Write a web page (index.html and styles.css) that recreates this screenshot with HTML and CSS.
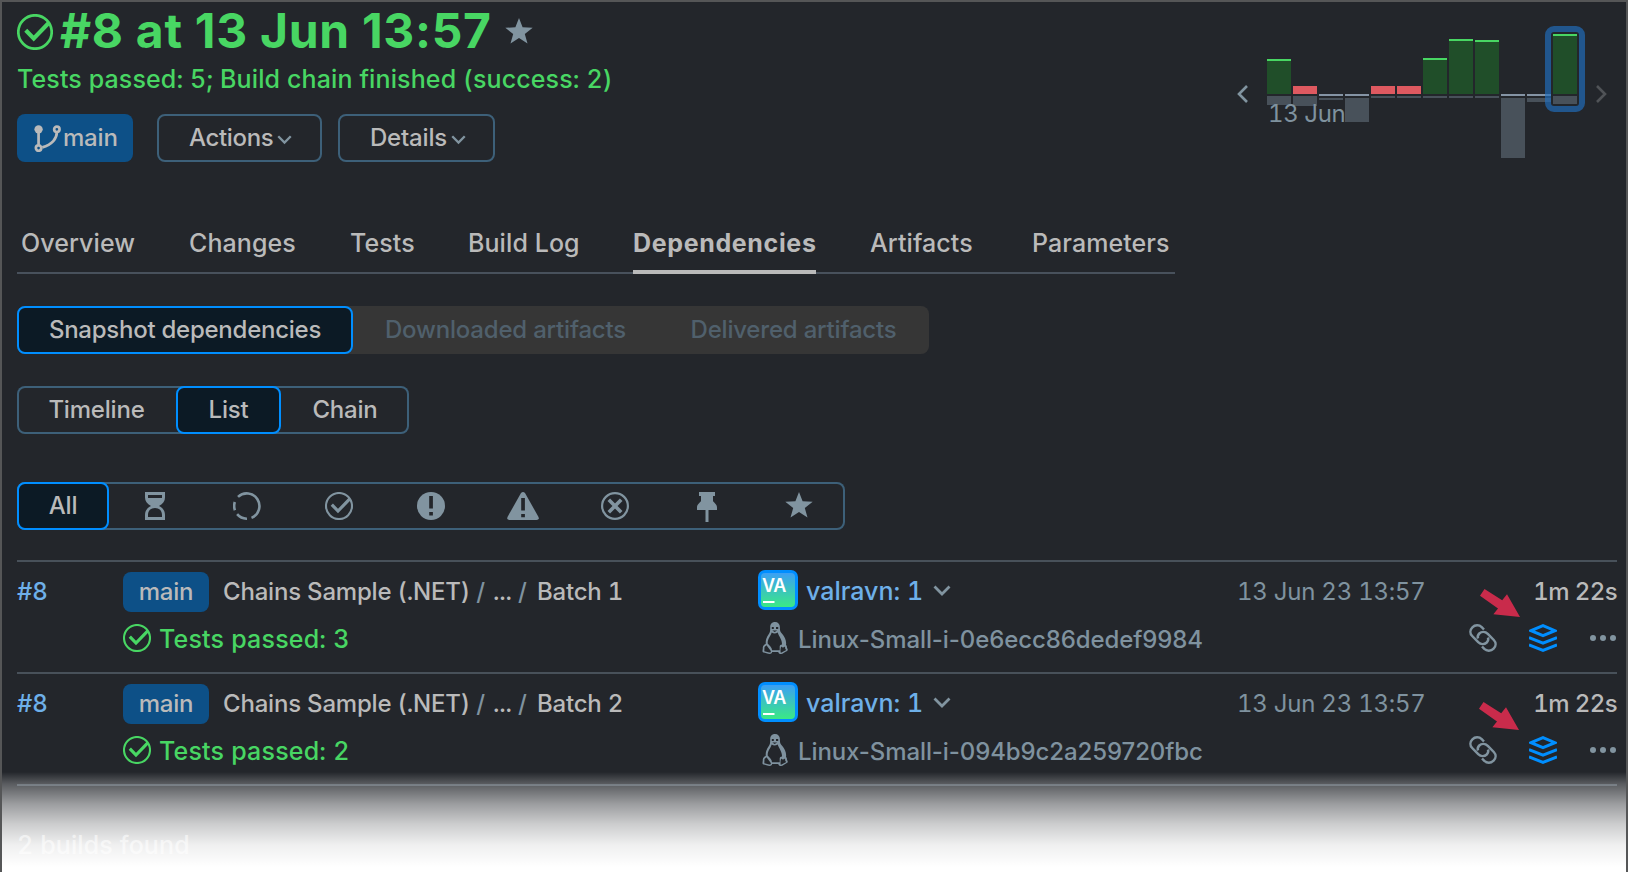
FILE: index.html
```html
<!DOCTYPE html>
<html lang="en">
<head>
<meta charset="utf-8">
<title>Build #8 dependencies</title>
<link rel="stylesheet" href="styles.css">
</head>
<body>
<svg class="defs" width="0" height="0">
  <defs>
    <linearGradient id="avatar-fill" x1="0" y1="0" x2="0" y2="1"><stop offset="0" stop-color="#3b9ff5"/><stop offset="1" stop-color="#3be985"/></linearGradient>
    <symbol id="check" viewBox="0 0 28 28"><g fill="none" stroke="currentColor"><circle cx="14" cy="14" r="13" stroke-width="2.100"/><path d="M6.8 12.6l6.2 6.4L25 6.600" stroke-width="3.200"/></g></symbol>
    <symbol id="star" viewBox="0 0 28 26"><path fill="currentColor" d="M14 0l3.6 9.3 10.1.5-7.9 6.2 2.7 9.6L14 20.1l-8.5 5.500L8.200 16 .3 9.800l10.100-.5z"/></symbol>
    <symbol id="chevron" viewBox="0 0 18 12"><path d="M1.500 1.500L9 9l7.500-7.500" fill="none" stroke="currentColor" stroke-width="2.800"/></symbol>
    <symbol id="tux" viewBox="0 0 26 32"><path fill="currentColor" d="M13 0c-3.200 0-4.800 2.200-4.800 5 0 3.600.1 5-1.700 7.600-1.900 2.800-3.200 5.700-2.700 9.200C1.800 23 .4 24.500.8 26.500c-.2 1.600-.9 3.700.7 4.100 1.700.3 5.300 1.700 7.300 1.200 1.300-.4 1.300-1.700 1.300-1.700h6.200s.3 1.700 1.700 1.900c2.500.3 3.900-1.500 6-2.500 1.700-.9 2.300-1.500 1.200-3.300-.5-1 .2-2.300-1.200-3.300.7-4.200-1.300-8-3.700-11C17.800 9.500 18 8 17.900 5 17.800 2 16 0 13 0z"/><path fill="#23262b" d="M9.700 10.500c1.800 1.300 3.900 1.300 6 0 .9 3.500 4.600 7 4.300 12-1.400 0-2.300.7-2.300 2v3.800H10c.1-3-2.700-5-4.300-6.900-.2-4.400 2.700-7 4-10.900zM4.500 23.300l4.300 5.600c.3 1.400-.5 1.700-1.600 1.500l-4.900-1.200.2-4.300zM19.300 24.600c1 1.400 2.500 1 3.700-.2l.3 2.500 1 1.200-5.300 2.700c-.7-.3-.6-4.600.3-6.200z"/><path fill="#23262b" d="M9.800 5h2v2h-2zM14 5h2.200v2H14zM10.300 8.400h4.800L12.700 10z"/></symbol>
    <symbol id="link" viewBox="0 0 28 28"><g fill="none" stroke="currentColor" stroke-width="2.500"><path d="M15 5.500l-2.300-2.400C10.200.7 6 .7 3.400 3.300.8 5.900.8 9.500 3.200 12l6 6.200c2.600 2.500 6.200 2.500 8.500.3 1.500-1.500 1.900-3.300 1.300-5"/><path d="M13 22.500l2.300 2.400c2.500 2.400 6.700 2.400 9.300-.2 2.600-2.600 2.600-6.200.2-8.700l-6-6.200c-2.600-2.500-6.200-2.500-8.500-.3-1.500 1.500-1.900 3.300-1.300 5"/></g></symbol>
    <symbol id="layers" viewBox="0 0 28 28"><g fill="none" stroke="currentColor" stroke-width="3"><path d="M2 6.700l12-5 12 5-12 5z"/><path d="M0 13.600l14 5.500 14-5.500M0 20.800l14 5.500 14-5.500"/></g></symbol>
    <symbol id="dots" viewBox="0 0 26 6"><g fill="currentColor"><circle cx="3" cy="3" r="3"/><circle cx="13" cy="3" r="3"/><circle cx="23" cy="3" r="3"/></g></symbol>
    <symbol id="arrow" viewBox="0 0 40 28"><path fill="#c92b4b" d="M4.500 0l17.700 11.200L27 5.200 40 28l-26.600-2.800 4.600-5.700L0 6.800z"/></symbol>
  </defs>
</svg>
<div class="page">
  <header class="header">
    <div class="summary">
      <h1 class="title"><svg class="title-check"><use href="#check"/></svg><span class="title-text">#8 at 13 Jun 13:57</span><svg class="title-star"><use href="#star"/></svg></h1>
      <p class="status">Tests passed: 5; Build chain finished (success: 2)</p>
      <div class="actions">
        <a class="branch"><svg class="branch-icon" viewBox="0 0 26 26"><g fill="none" stroke="#bababa" stroke-width="2.600"><path d="M4.400 4v15M22 7c0 6-4.500 12-14 14.500"/><circle cx="4.400" cy="22.200" r="2.600"/><circle cx="22" cy="4.200" r="2.600"/></g><circle cx="4.400" cy="4.200" r="4" fill="#bababa"/></svg><span>main</span></a>
        <button class="button button-actions"><span>Actions</span><svg class="button-chevron"><use href="#chevron"/></svg></button>
        <button class="button button-details"><span>Details</span><svg class="button-chevron"><use href="#chevron"/></svg></button>
      </div>
    </div>
    <svg class="history" viewBox="1230 20 390 145">
      <g fill="#48515a"><path d="M1267 96h24v9h-24zM1293 96h24v10h-24zM1319 98h24v2h-24zM1345 98h24v24h-24zM1371 96h24v2h-24zM1397 96h24v2h-24zM1423 96h24v2h-24zM1449 96h24v2h-24zM1475 96h24v2h-24zM1501 98h24v60h-24zM1527 98h24v4h-24zM1553 96h24v8h-24z"/></g>
      <path fill="#8594a5" d="M1319 94h24v2h-24zM1345 94h24v2h-24zM1501 94h24v2h-24zM1527 94h24v2h-24z"/>
      <path fill="#204e29" d="M1267 59h24v35h-24zM1423 58h24v36h-24zM1449 39h24v55h-24zM1475 40h24v54h-24zM1553 34h24v60h-24z"/>
      <path fill="#48d663" d="M1267 59h24v2h-24zM1423 58h24v2h-24zM1449 39h24v2h-24zM1475 40h24v2h-24zM1553 34h24v2h-24z"/>
      <path fill="#de5960" d="M1293 86h24v8h-24zM1371 86h24v8h-24zM1397 86h24v8h-24z"/>
      <rect x="1548" y="29" width="34" height="80" rx="6" fill="none" stroke="#2170c2" stroke-opacity=".65" stroke-width="6"/>
      <text class="history-date" x="1268" y="122">13 Jun</text>
      <path d="M1247 86l-8 8 8 8" fill="none" stroke="#8194a0" stroke-width="2.600"/>
      <path d="M1597 86l8 8-8 8" fill="none" stroke="#505357" stroke-width="2.600"/>
    </svg>
  </header>

  <nav class="tabs">
    <a class="tab t-overview">Overview</a><a class="tab t-changes">Changes</a><a class="tab t-tests">Tests</a><a class="tab t-log">Build Log</a><a class="tab tab-active">Dependencies</a><a class="tab t-artifacts">Artifacts</a><a class="tab t-params">Parameters</a>
  </nav>

  <div class="group group-kind"><span class="seg seg-active seg-snapshot">Snapshot dependencies</span><span class="seg seg-downloaded">Downloaded artifacts</span><span class="seg seg-delivered">Delivered artifacts</span></div>
  <div class="group group-view"><span class="seg seg-timeline">Timeline</span><span class="seg seg-active seg-list">List</span><span class="seg seg-chain">Chain</span></div>
  <div class="group group-filter">
    <span class="seg seg-active seg-all">All</span>
    <span class="cell"><svg viewBox="0 0 28 28"><path fill="currentColor" fill-rule="evenodd" d="M4 0h20v5.500c0 3.500-2 6.500-6 8.500 4 2 6 5 6 9v5H4v-5c0-4 2-7 6-9-4-2-6-5-6-8.500zM7 3v3h14V3zM7 25h14v-2c0-4.500-3-7-7-7s-7 2.500-7 7z"/></svg></span>
    <span class="cell"><svg viewBox="0 0 28 28"><g fill="none" stroke="currentColor" stroke-width="2.600"><path d="M5 4.900A12.700 12.700 0 1 1 18.500 25.900M1.900 18.200A12.700 12.700 0 0 1 1.800 10"/><path d="M4.100 22.200A12.700 12.700 0 0 0 14 26.700"/></g></svg></span>
    <span class="cell"><svg><use href="#check"/></svg></span>
    <span class="cell"><svg viewBox="0 0 28 28"><circle cx="14" cy="14" r="14" fill="currentColor"/><path fill="#23262b" d="M12.200 4h3.700v12.500h-3.700zM12.200 20h3.700v3.400h-3.700z"/></svg></span>
    <span class="cell"><svg class="wide" viewBox="0 0 32 28"><path fill="currentColor" d="M14 1q2-2 4 0l13.500 24q1 3-2 3h-27q-3 0-2-3z"/><path fill="#23262b" d="M14.200 6h3.700v12.500h-3.700zM14.200 22h3.700v3.200h-3.700z"/></svg></span>
    <span class="cell"><svg viewBox="0 0 28 28"><g fill="none" stroke="currentColor"><circle cx="14" cy="14" r="12.900" stroke-width="2.200"/><path d="M7.800 7.800l12.400 12.400M20.200 7.800L7.800 20.200" stroke-width="3.600"/></g></svg></span>
    <span class="cell"><svg class="pin" viewBox="0 0 20 30"><path fill="currentColor" d="M2 0h16v4h-2v5c1 2 4 3 4 6.500V18h-8.500v12h-3V18H0v-2.500C0 12 3 11 4 9V4H2z"/></svg></span>
    <span class="cell"><svg class="filter-star"><use href="#star"/></svg></span>
  </div>

  <main class="builds">
    <article class="build">
      <a class="number">#8</a>
      <div class="info">
        <div class="path"><span class="badge">main</span><span class="crumbs">Chains Sample (.NET) <i>/</i> ... <i>/</i> Batch 1</span></div>
        <div class="result"><svg class="icon"><use href="#check"/></svg><span>Tests passed: 3</span></div>
      </div>
      <div class="agent">
        <div class="user"><svg class="avatar" viewBox="0 0 40 40"><rect width="40" height="40" rx="7" fill="#008eff"/><rect x="3" y="3" width="34" height="34" rx="4" fill="url(#avatar-fill)"/><text class="avatar-text" x="4" y="22">VA</text><path fill="#fff" d="M5 31h11.500v2H5z"/></svg><span>valravn: 1</span><svg class="user-chevron"><use href="#chevron"/></svg></div>
        <div class="machine"><svg class="tux"><use href="#tux"/></svg><span>Linux-Small-i-0e6ecc86dedef9984</span></div>
      </div>
      <time class="date">13 Jun 23 13:57</time>
      <div class="side">
        <span class="duration">1m 22s</span>
        <div class="tools"><svg class="icon"><use href="#link"/></svg><svg class="icon layers"><use href="#layers"/></svg><svg class="dots"><use href="#dots"/></svg></div>
        <svg class="pointer"><use href="#arrow"/></svg>
      </div>
    </article>
    <article class="build">
      <a class="number">#8</a>
      <div class="info">
        <div class="path"><span class="badge">main</span><span class="crumbs">Chains Sample (.NET) <i>/</i> ... <i>/</i> Batch 2</span></div>
        <div class="result"><svg class="icon"><use href="#check"/></svg><span>Tests passed: 2</span></div>
      </div>
      <div class="agent">
        <div class="user"><svg class="avatar" viewBox="0 0 40 40"><rect width="40" height="40" rx="7" fill="#008eff"/><rect x="3" y="3" width="34" height="34" rx="4" fill="url(#avatar-fill)"/><text class="avatar-text" x="4" y="22">VA</text><path fill="#fff" d="M5 31h11.500v2H5z"/></svg><span>valravn: 1</span><svg class="user-chevron"><use href="#chevron"/></svg></div>
        <div class="machine"><svg class="tux"><use href="#tux"/></svg><span>Linux-Small-i-094b9c2a259720fbc</span></div>
      </div>
      <time class="date">13 Jun 23 13:57</time>
      <div class="side">
        <span class="duration">1m 22s</span>
        <div class="tools"><svg class="icon"><use href="#link"/></svg><svg class="icon layers"><use href="#layers"/></svg><svg class="dots"><use href="#dots"/></svg></div>
        <svg class="pointer pointer-second"><use href="#arrow"/></svg>
      </div>
    </article>
  </main>
  <footer class="found">2 builds found</footer>
  <div class="fade"></div>
</div>
</body>
</html>
```
FILE: styles.css
```css
* { box-sizing: border-box; }
body { margin: 0; background: #fff; }
.defs { position: absolute; }
svg { display: block; flex: none; }
.page {
  position: relative;
  width: 1628px;
  height: 872px;
  overflow: hidden;
  padding: 0 9px 0 15px;
  border: 2px solid #555657;
  border-bottom: 0;
  background: #23262b;
  color: #bababa;
  font: 450 24px/30px Inter, "Liberation Sans", sans-serif;
  letter-spacing: -.2px;
  font-variant-numeric: tabular-nums;
  white-space: nowrap;
}
.header { display: flex; justify-content: space-between; height: 202px; }
.title { display: flex; align-items: center; margin: 0; height: 60px; color: #48d663; font-size: 48px; line-height: 58px; font-weight: 700; letter-spacing: .7px; font-variant-numeric: normal; }
.title-check { width: 36px; height: 36px; }
.title-text { width: 430px; margin: -2px 0 0 7px; }
.title-star { width: 28px; height: 26px; margin: -2px 0 0 15px; color: #8194a0; }
.status { margin: 3px 0 0; color: #48d663; font-size: 25px; line-height: 28px; letter-spacing: .12px; }
.actions { display: flex; margin-top: 21px; }
.branch { display: flex; align-items: center; width: 116px; height: 48px; margin-right: 24px; padding-left: 17px; border-radius: 8px; background: #0d5087; line-height: 46px; }
.branch span, .button span { margin-top: -1px; }
.branch-icon { width: 27px; height: 27px; margin-right: 2px; }
.button { display: flex; align-items: center; height: 48px; margin: 0 16px 0 0; padding: 0 0 0 30px; border: 2px solid #3d6079; border-radius: 8px; background: none; color: inherit; font: inherit; letter-spacing: -.35px; }
.button-actions { width: 165px; }
.button-details { width: 157px; letter-spacing: -.2px; }
.button-chevron { width: 15px; height: 10px; margin: 3px 0 0 4px; color: #8194a0; }
.history { width: 390px; height: 145px; margin: 18px -3px 0 0; }
.history-date { fill: #7f929f; font-size: 24px; font-weight: 400; letter-spacing: -.4px; }

.tabs { display: flex; width: 1158px; height: 70px; padding: 24px 0 0 4px; border-bottom: 2px solid #48515c; font-size: 25px; letter-spacing: .08px; }
.tab { height: 46px; line-height: 30px; }
.t-overview { width: 168px; }
.t-changes { width: 161px; }
.t-tests { width: 118px; }
.t-log { width: 165px; }
.tab-active { width: 183px; margin-right: 54px; border-bottom: 4px solid #bababa; font-weight: 700; letter-spacing: .65px; }
.t-artifacts { width: 162px; }

.group { display: flex; height: 48px; border-radius: 8px; line-height: 48px; }
.seg { text-align: center; }
.seg-active { height: 48px; border: 2px solid #008eff; border-radius: 8px; background: #0c1a25; line-height: 44px; }
.group-kind { width: 912px; margin-top: 32px; background: #363636; color: #50606c; }
.seg-snapshot { width: 336px; color: #bababa; letter-spacing: -.25px; }
.seg-downloaded { width: 305px; }
.seg-delivered { width: 271px; }
.group-view { width: 392px; margin-top: 32px; box-shadow: inset 0 0 0 2px #3d6079; }
.seg-timeline { width: 159px; }
.seg-list { width: 105px; }
.seg-chain { width: 128px; }
.group-filter { width: 828px; margin-top: 48px; box-shadow: inset 0 0 0 2px #3d6079; }
.seg-all { width: 92px; }
.cell { display: flex; align-items: center; justify-content: center; width: 92px; color: #8194a0; }
.cell svg { width: 28px; height: 28px; }
.cell .wide { width: 32px; }
.cell .pin { width: 20px; height: 30px; margin-top: 2px; }
.cell .filter-star { height: 26px; margin-top: -2px; }

.builds { margin-top: 30px; border-bottom: 2px solid #48515a; }
.build { display: grid; grid-template-columns: 106px 635px 479px 1fr auto; height: 112px; padding-top: 8px; border-top: 2px solid #48515a; line-height: 44px; }
.number, .user { color: #6eb0e9; }
.path, .user, .result, .machine, .tools { display: flex; align-items: center; }
.path, .user { height: 44px; }
.result, .machine, .tools { height: 48px; }
.badge { width: 86px; height: 40px; margin-right: 14px; border-radius: 8px; background: #0d5087; line-height: 40px; text-align: center; }
.crumbs i { margin-right: 2px; color: #7f929f; font-style: normal; }
.crumbs i:last-child { margin-right: 4px; }
.result { color: #48d663; font-size: 25px; letter-spacing: .2px; }
.result span { margin-left: 8px; padding-top: 2px; }
.icon { width: 28px; height: 28px; }
.user { font-size: 25px; letter-spacing: 0; }
.user span { margin-top: -3px; }
.avatar { width: 40px; height: 40px; margin: -4px 8px 0 0; }
.avatar-text { fill: #fff; font-size: 18px; font-weight: 600; letter-spacing: -.5px; }
.user-chevron { width: 18px; height: 12px; margin: -3px 0 0 10px; color: #8194a0; }
.machine { color: #7f929f; letter-spacing: -.1px; font-variant-numeric: normal; }
.tux { width: 26px; height: 32px; margin: 0 10px 0 4px; }
.machine span { padding-top: 3px; }
.date { color: #7f929f; font-weight: 400; letter-spacing: -.25px; }
.side { position: relative; width: 148px; text-align: right; }
.duration { display: block; height: 44px; letter-spacing: -.6px; }
.tools { justify-content: flex-end; padding-right: 1px; color: #8194a0; }
.layers { margin: 0 33px 0 32px; color: #008eff; }
.dots { width: 26px; height: 6px; }
.pointer { position: absolute; left: 11px; top: 19px; width: 40px; height: 28px; }
.pointer-second { left: 10px; top: 20px; }
.found { margin-top: 42px; font-size: 25px; letter-spacing: .12px; line-height: 34px; opacity: .8; }
.fade {
  position: absolute;
  inset: 770px -2px 0;
  background: linear-gradient(rgba(255,255,255,0), rgba(255,255,255,.25) 12%, rgba(255,255,255,.55) 32%, rgba(255,255,255,.77) 52%, rgba(255,255,255,.93) 73%, #fff 95%);
}
```
